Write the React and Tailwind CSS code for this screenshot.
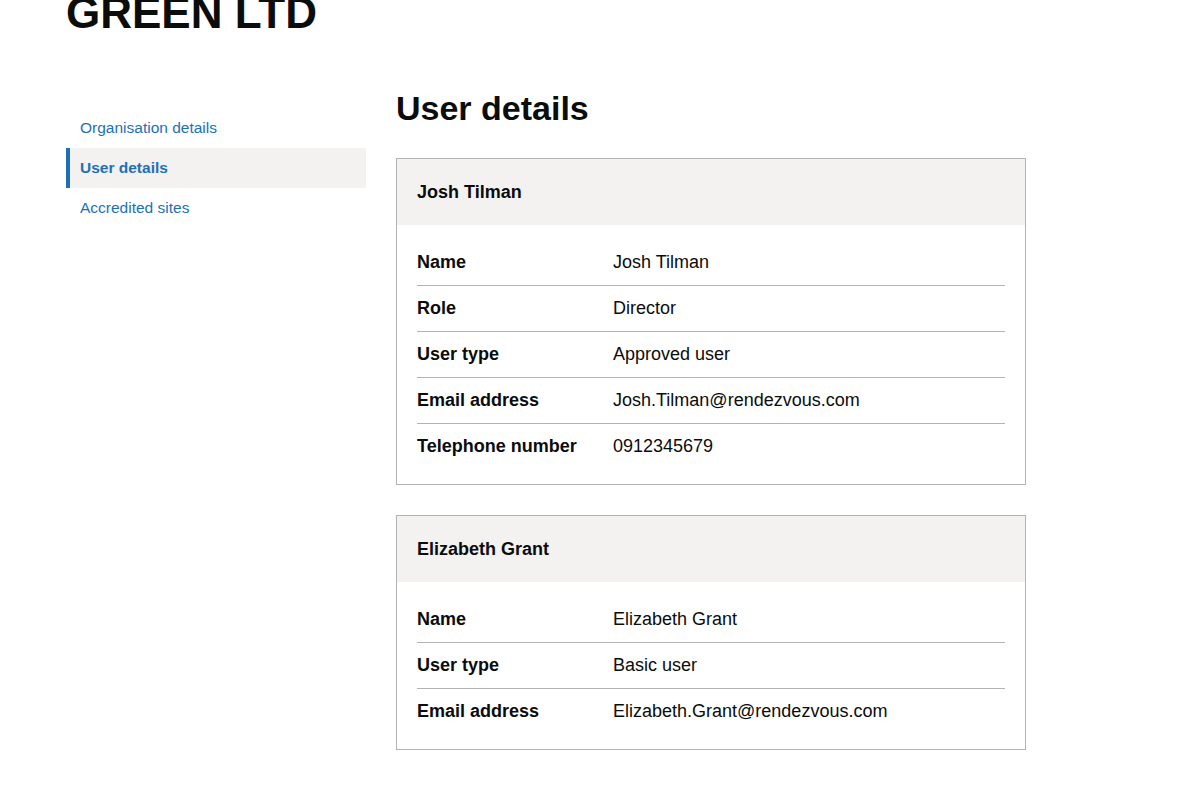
import React from "react";

const users = [
  {
    name: "Josh Tilman",
    rows: [
      ["Name", "Josh Tilman"],
      ["Role", "Director"],
      ["User type", "Approved user"],
      ["Email address", "Josh.Tilman@rendezvous.com"],
      ["Telephone number", "0912345679"],
    ],
  },
  {
    name: "Elizabeth Grant",
    rows: [
      ["Name", "Elizabeth Grant"],
      ["User type", "Basic user"],
      ["Email address", "Elizabeth.Grant@rendezvous.com"],
    ],
  },
];

const nav = [
  { label: "Organisation details", active: false },
  { label: "User details", active: true },
  { label: "Accredited sites", active: false },
];

const SummaryCard = ({ user }) => (
  <div className="border border-[#b1b4b6] mb-[30px]">
    <div className="bg-[#f3f2f1] h-[66px] px-5 flex items-center">
      <h2 className="text-[18px] font-bold leading-[25px]">{user.name}</h2>
    </div>
    <dl className="px-5 pt-[15px] pb-[15px]">
      {user.rows.map(([k, v], i) => (
        <div
          key={k}
          className={`flex py-[10px] ${i < user.rows.length - 1 ? "border-b border-[#b1b4b6]" : ""}`}
        >
          <dt className="w-[196px] shrink-0 font-bold text-[18px] leading-[25px]">{k}</dt>
          <dd className="text-[18px] leading-[25px]">{v}</dd>
        </div>
      ))}
    </dl>
  </div>
);

const App = () => {
  return (
    <div
      className="bg-white min-h-screen text-[#0b0c0c] overflow-hidden"
      style={{ fontFamily: '"Liberation Sans", Arial, sans-serif' }}
    >
      <div className="px-[66px]">
        <h1 className="text-[44px] font-bold leading-[50px] -mt-[12px] mb-[58px]">GREEN LTD</h1>
        <div className="flex">
          <nav className="w-[300px] shrink-0 mr-[30px] pt-[12px]">
            <ul>
              {nav.map((n) => (
                <li
                  key={n.label}
                  className={`h-10 flex items-center text-[15.5px] ${
                    n.active
                      ? "bg-[#f3f2f1] border-l-4 border-[#1d70b8] pl-[10px] font-bold"
                      : "pl-[14px]"
                  }`}
                >
                  <a href="#" className="text-[#1d70b8]">{n.label}</a>
                </li>
              ))}
            </ul>
          </nav>
          <main className="w-[630px] -mt-[8px]">
            <h1 className="text-[34px] font-bold leading-[40px] mb-[30px]">User details</h1>
            {users.map((u) => (
              <SummaryCard key={u.name} user={u} />
            ))}
          </main>
        </div>
      </div>
    </div>
  );
};

export default App;
